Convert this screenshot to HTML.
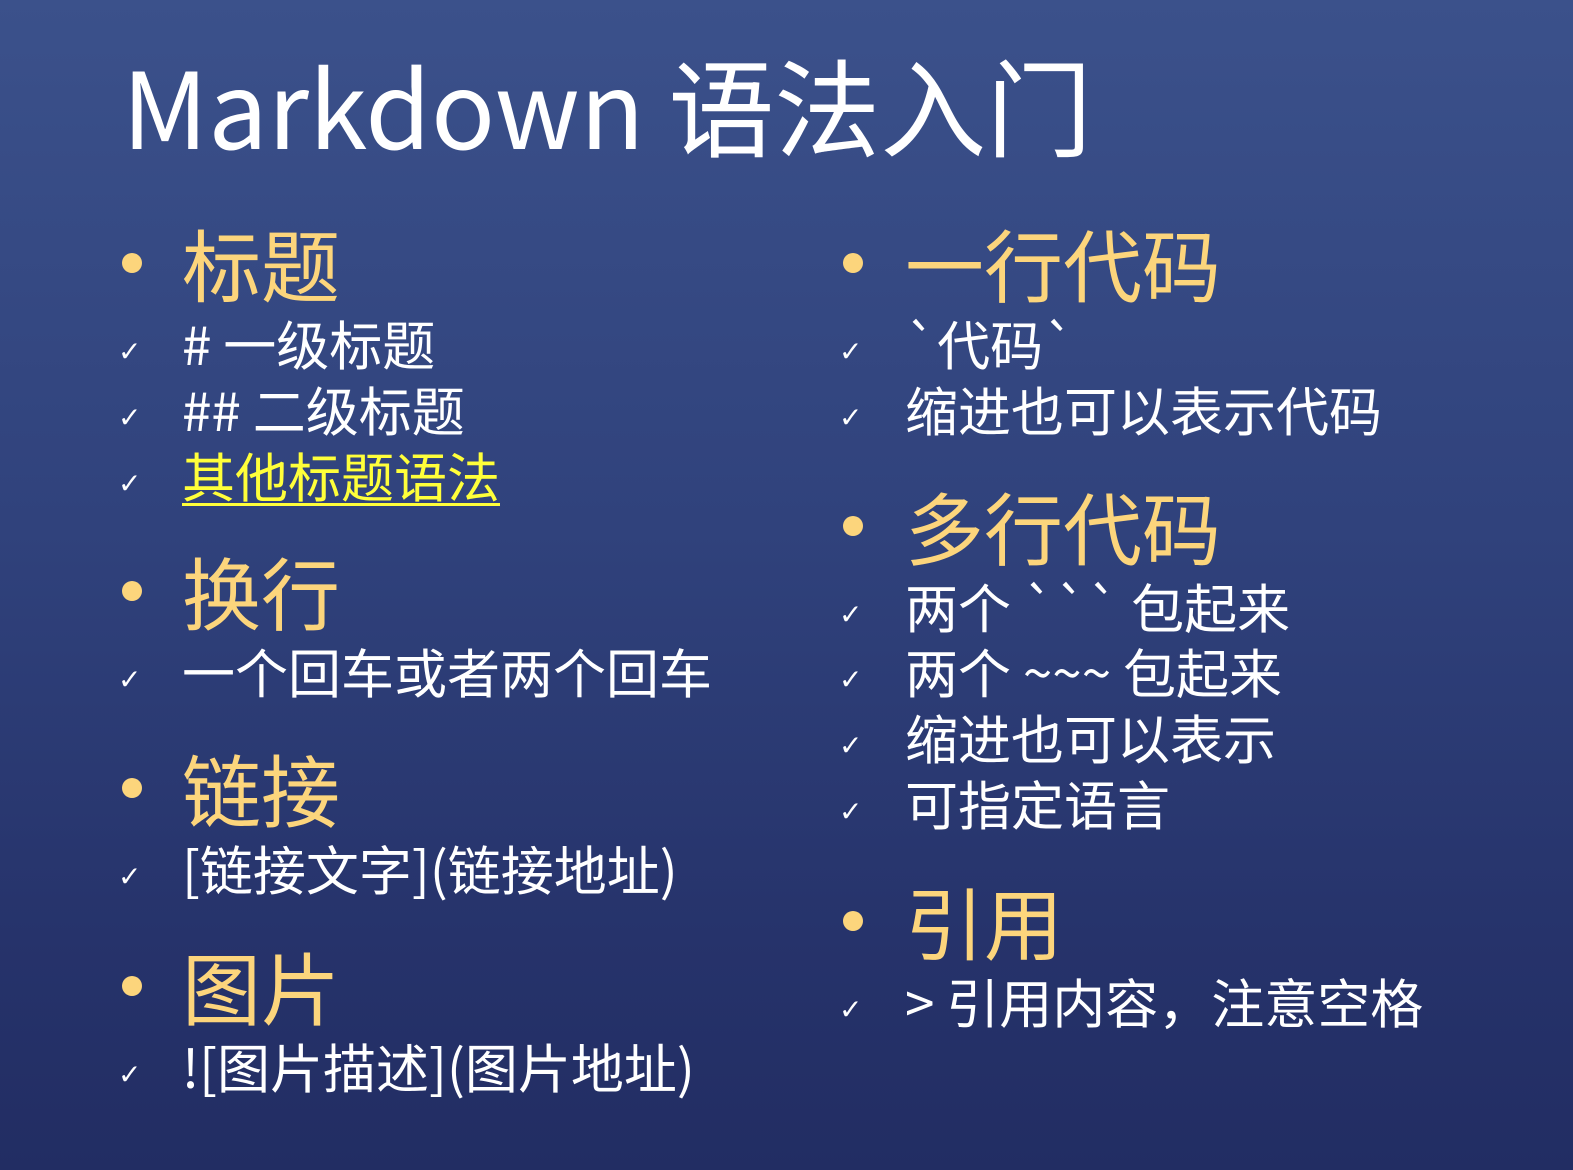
<!DOCTYPE html>
<html><head><meta charset="utf-8"><style>
html,body{margin:0;padding:0}
body{width:1573px;height:1170px;overflow:hidden;position:relative;
background:linear-gradient(180deg,#3b518b 0%,#30427c 45%,#26336b 80%,#222d63 100%);
font-family:"Liberation Sans","Noto Sans CJK SC",sans-serif;color:#fff}
.t{position:absolute;white-space:nowrap;line-height:1}
.title{left:122px;top:50px;font-size:106px;font-family:"Noto Sans CJK SC","Liberation Sans",sans-serif}
.h{font-size:79px;color:#fcd57c;font-family:"Noto Sans CJK SC",sans-serif}
.s{font-size:53px;font-family:"Noto Sans CJK SC",sans-serif}
.dot{position:absolute;width:20px;height:20px;border-radius:50%;background:#fcd57c}
.ck{position:absolute;font-size:28px;line-height:1;color:#fff;font-family:"DejaVu Sans",sans-serif}
.y{color:#ffff3a;text-decoration:underline;text-decoration-thickness:3px;text-underline-offset:6px}
</style></head><body>
<div class="t title">Markdown 语法入门</div>

<div class="dot" style="left:122px;top:253px"></div><div class="t h" style="left:182px;top:222px">标题</div>
<div class="ck" style="left:118px;top:338px">✓</div><div class="t s" style="left:182px;top:317px">#&nbsp;一级标题</div>
<div class="ck" style="left:118px;top:404px">✓</div><div class="t s" style="left:182px;top:383px">##&nbsp;二级标题</div>
<div class="ck" style="left:118px;top:470px">✓</div><div class="t s y" style="left:182px;top:449px">其他标题语法</div>

<div class="dot" style="left:122px;top:581px"></div><div class="t h" style="left:182px;top:550px">换行</div>
<div class="ck" style="left:118px;top:666px">✓</div><div class="t s" style="left:182px;top:645px">一个回车或者两个回车</div>

<div class="dot" style="left:122px;top:778px"></div><div class="t h" style="left:182px;top:747px">链接</div>
<div class="ck" style="left:118px;top:863px">✓</div><div class="t s" style="left:182px;top:842px">[链接文字](链接地址)</div>

<div class="dot" style="left:122px;top:976px"></div><div class="t h" style="left:182px;top:945px">图片</div>
<div class="ck" style="left:118px;top:1061px">✓</div><div class="t s" style="left:182px;top:1040px">![图片描述](图片地址)</div>

<div class="dot" style="left:843px;top:253px"></div><div class="t h" style="left:905px;top:222px">一行代码</div>
<div class="ck" style="left:839px;top:338px">✓</div><div class="t s" style="left:905px;top:317px">&#96;代码&#96;</div>
<div class="ck" style="left:839px;top:404px">✓</div><div class="t s" style="left:905px;top:383px">缩进也可以表示代码</div>

<div class="dot" style="left:843px;top:516px"></div><div class="t h" style="left:905px;top:485px">多行代码</div>
<div class="ck" style="left:839px;top:601px">✓</div><div class="t s" style="left:905px;top:580px">两个 &#96;&#96;&#96; 包起来</div>
<div class="ck" style="left:839px;top:666px">✓</div><div class="t s" style="left:905px;top:645px">两个 ~~~ 包起来</div>
<div class="ck" style="left:839px;top:732px">✓</div><div class="t s" style="left:905px;top:711px">缩进也可以表示</div>
<div class="ck" style="left:839px;top:798px">✓</div><div class="t s" style="left:905px;top:777px">可指定语言</div>

<div class="dot" style="left:843px;top:911px"></div><div class="t h" style="left:905px;top:880px">引用</div>
<div class="ck" style="left:839px;top:996px">✓</div><div class="t s" style="left:905px;top:975px">&gt; 引用内容，注意空格</div>
</body></html>
